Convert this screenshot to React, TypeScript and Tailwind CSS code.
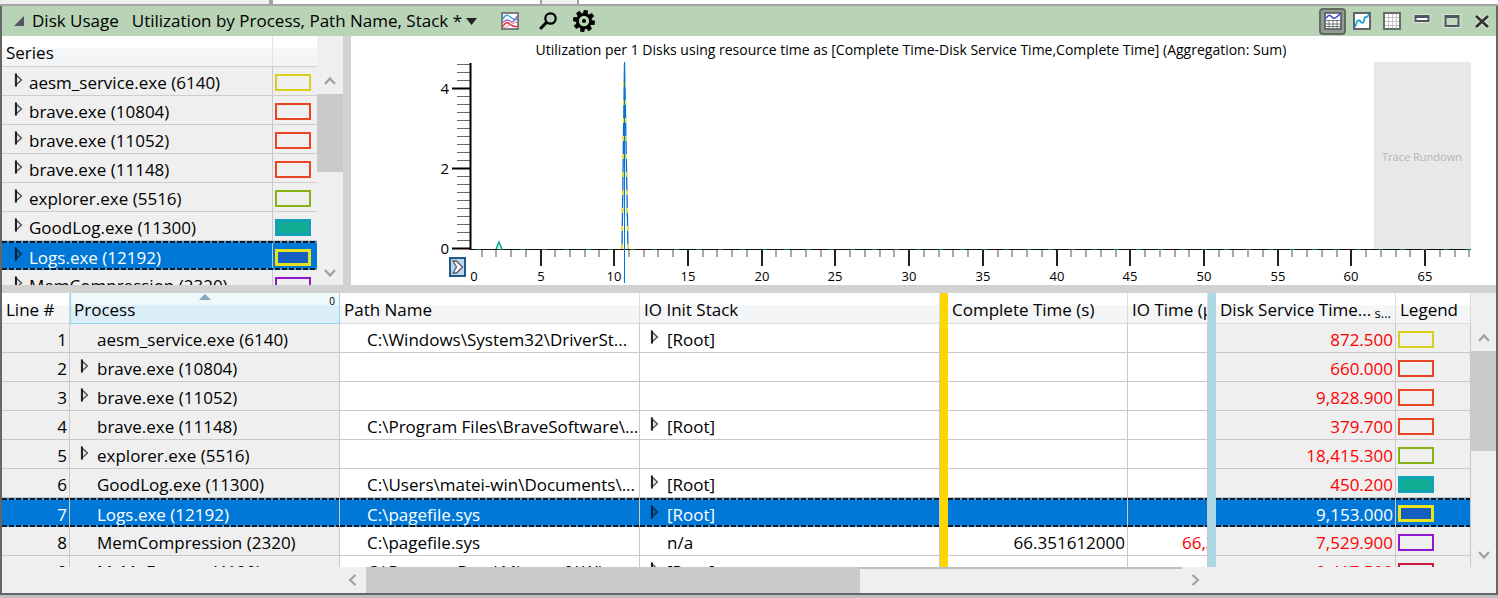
import React from "react";

type Row = { name: string; expand?: boolean; path?: string; stack?: string; stackExpand?: boolean; complete?: string; io?: string; disk: string; color: string; fill?: string };

const rows: Row[] = [
  { name: "aesm_service.exe (6140)", path: "C:\\Windows\\System32\\DriverSt...", stack: "[Root]", stackExpand: true, disk: "872.500", color: "#d6d01c" },
  { name: "brave.exe (10804)", expand: true, disk: "660.000", color: "#ea4522" },
  { name: "brave.exe (11052)", expand: true, disk: "9,828.900", color: "#ea4522" },
  { name: "brave.exe (11148)", path: "C:\\Program Files\\BraveSoftware\\...", stack: "[Root]", stackExpand: true, disk: "379.700", color: "#ea4522" },
  { name: "explorer.exe (5516)", expand: true, disk: "18,415.300", color: "#86b313" },
  { name: "GoodLog.exe (11300)", path: "C:\\Users\\matei-win\\Documents\\...", stack: "[Root]", stackExpand: true, disk: "450.200", color: "#12a2b8", fill: "#12ad94" },
  { name: "Logs.exe (12192)", path: "C:\\pagefile.sys", stack: "[Root]", stackExpand: true, disk: "9,153.000", color: "#e8e31c", fill: "#155fc1" },
  { name: "MemCompression (2320)", path: "C:\\pagefile.sys", stack: "n/a", complete: "66.351612000", io: "66,351", disk: "7,529.900", color: "#9017cf" },
  { name: "MsMpEng.exe (4120)", path: "C:\\ProgramData\\Microsoft\\Wi...", stack: "[Root]", stackExpand: true, disk: "9,417.500", color: "#d0173f" },
];
const SELECTED = 6;

const headerBg = "bg-[linear-gradient(#ffffff_0%,#ffffff_38%,#f5f6f8_42%,#f2f4f6_100%)]";
const dash = "bg-[repeating-linear-gradient(90deg,#0b1a28_0_5px,#3f9be4_5px_7px)]";

function Swatch({ color, fill }: { color: string; fill?: string }) {
  return (
    <svg viewBox="0 0 36 17" className="block h-[17px] w-9">
      <rect x={fill ? 1.5 : 1} y={fill ? 1.5 : 1} width={fill ? 33 : 34} height={fill ? 14 : 15} fill={fill ?? "none"} stroke={color} strokeWidth={fill ? 3 : 2} />
    </svg>
  );
}

function Expander({ dark }: { dark?: boolean }) {
  return (
    <svg viewBox="0 0 9 14" className="block h-[14px] w-[9px]">
      <path d="M1.500 1.500 7.500 7 1.500 12.500Z" fill={dark ? "#0a63a8" : "#e6e6e6"} stroke={dark ? "#082b50" : "#444"} strokeWidth="1.2" />
      <path d="M2 .6v12.8" stroke={dark ? "#061c36" : "#222"} strokeWidth="2" />
    </svg>
  );
}

function Chevron({ d }: { d: string }) {
  return (
    <svg viewBox="0 0 12 12" className="h-3 w-3" fill="none" stroke="#a0a0a0" strokeWidth="2.2">
      <path d={d} />
    </svg>
  );
}

function VerticalScroll({ label, thumb }: { label: string; thumb: string }) {
  return (
    <div className="flex w-full flex-col items-center bg-[#efefef]">
      <button aria-label={`Scroll ${label} up`} className="flex h-[27px] w-full items-center justify-center"><Chevron d="M1 9 6 3.5 11 9" /></button>
      <div className={`w-full bg-[#cacaca] ${thumb}`} />
      <div className="flex-1" />
      <button aria-label={`Scroll ${label} down`} className="flex h-6 w-full items-center justify-center"><Chevron d="M1 3 6 8.500 11 3" /></button>
    </div>
  );
}

function SelectionEdges() {
  return (
    <>
      <div className={`absolute inset-x-0 top-0 h-[2px] ${dash}`} />
      <div className={`absolute inset-x-0 bottom-0 h-[2px] ${dash}`} />
    </>
  );
}

function TitleBar() {
  return (
    <header className="flex h-[30px] shrink-0 items-center bg-[#b9d3b7] pr-[5px] pl-3">
      <svg viewBox="0 0 10 10" className="mr-2 h-[10px] w-[10px]"><path d="M10 0v10H0Z" fill="#55555f" /></svg>
      <h1 className="mr-[13px] text-[17px]">Disk Usage</h1>
      <button className="flex items-center gap-1 text-[17px]">
        <span>Utilization by Process, Path Name, Stack *</span>
        <svg viewBox="0 0 11 7" className="h-[7px] w-[11px]"><path d="M0 0h11L5.500 7Z" fill="#222" /></svg>
      </button>
      <button aria-label="Graph settings" className="ml-6">
        <svg viewBox="0 0 18 18" className="h-[18px] w-[18px]" fill="none">
          <rect x="1" y="1" width="16" height="16" fill="#fff" stroke="#66616a" strokeWidth="1.6" />
          <path d="M2 7.500C3.500 3 6 2.500 8 4s4 4.500 8 3.500" stroke="#39a7e0" strokeWidth="1.4" />
          <path d="M2 10.500c3-3 5-3.500 7-1.500s4 1.500 7-5" stroke="#a06bc5" strokeWidth="1.4" />
          <path d="M2 14.500c2-4 4-4.500 6-3s4 3.500 8 3" stroke="#ee3340" strokeWidth="1.6" />
          <path d="M2 16c4-1 5-2 7-3s4-2 7-3" stroke="#f0808a" strokeWidth="1" />
        </svg>
      </button>
      <button aria-label="Find" className="ml-5">
        <svg viewBox="0 0 18 18" className="h-[18px] w-[18px]" fill="none" stroke="#000">
          <circle cx="11.500" cy="6.500" r="5.200" strokeWidth="2.200" />
          <path d="M7.500 10.500 2 16" strokeWidth="3" strokeLinecap="round" />
        </svg>
      </button>
      <button aria-label="Settings" className="ml-4">
        <svg viewBox="-11 -11 22 22" className="h-[22px] w-[22px]">
          {[10, 55, 100, 145, 190, 235, 280, 325].map((a) => <path key={a} d="M-2.500-7 -2-11H2l.5 4Z" transform={`rotate(${a})`} />)}
          <circle r="6.600" fill="none" stroke="#000" strokeWidth="2.800" />
          <circle r="2" />
        </svg>
      </button>
      <div className="flex-1" />
      <button aria-label="Graph and table" aria-pressed="true" className="flex h-[27px] w-[27px] items-center justify-center rounded-sm border-2 border-[#636b62] bg-[#939c92]">
        <svg viewBox="0 0 18 18" className="h-[18px] w-[18px]" fill="none">
          <rect x="1" y="1" width="16" height="16" fill="#fff" stroke="#55575c" strokeWidth="1.600" />
          <path d="M1 8.500h16M5 9v8M9 9v8M13 9v8M1 12h16M1 14.500h16" stroke="#777" />
          <path d="M2 6.500C4 3 6 2.500 8 5s4 1 8-3" stroke="#3b41c5" strokeWidth="1.500" />
        </svg>
      </button>
      <button aria-label="Graph only" className="ml-[7px]">
        <svg viewBox="0 0 18 18" className="h-[18px] w-[18px]" fill="none">
          <rect x="1" y="1" width="16" height="16" fill="#fff" stroke="#55575c" strokeWidth="1.800" />
          <path d="M2 15C4 9 5 7 7 9s3 3 4 0 0-4 2-4 2-1 3-3" stroke="#1ba1dc" strokeWidth="1.800" />
        </svg>
      </button>
      <button aria-label="Table only" className="ml-3">
        <svg viewBox="0 0 18 18" className="h-[18px] w-[18px]" fill="none">
          <rect x="1" y="1" width="16" height="16" fill="#fff" />
          <path d="M5.500 2v14M9.500 2v14M13.500 2v14M2 5.500h14M2 9.500h14M2 13.500h14" stroke="#c4c4c4" />
          <rect x="1" y="1" width="16" height="16" stroke="#5c5e60" strokeWidth="1.800" />
        </svg>
      </button>
      <button aria-label="Minimize" className="ml-3">
        <svg viewBox="0 0 18 18" className="h-[18px] w-[18px]"><rect x=".5" y="2" width="17" height="9" rx="1" fill="#dbe8d9" /><rect x="2.500" y="4" width="13" height="5" fill="#fff" stroke="#505360" strokeWidth="2" /><path d="M2 4.500h14" stroke="#505360" strokeWidth="3" /></svg>
      </button>
      <button aria-label="Maximize" className="ml-3">
        <svg viewBox="0 0 18 18" className="h-[18px] w-[18px]"><rect x=".5" y="2" width="17" height="14" rx="1" fill="#dbe8d9" /><rect x="2.500" y="4" width="13" height="10" fill="#c3d9c1" stroke="#505360" strokeWidth="2" /><path d="M2 4.500h14" stroke="#505360" strokeWidth="3" /></svg>
      </button>
      <button aria-label="Close" className="ml-3">
        <svg viewBox="0 0 18 18" className="h-[18px] w-[18px]"><path d="M3 4 15 15M15 4 3 15" stroke="#dbe8d9" strokeWidth="5" /><path d="M3 4 15 15M15 4 3 15" stroke="#333" strokeWidth="2.800" /></svg>
      </button>
    </header>
  );
}

function SeriesPanel() {
  return (
    <section className="flex w-[341px] shrink-0 bg-[#efefef]">
      <div className="flex min-w-0 flex-1 flex-col overflow-hidden">
        <div className={`flex h-[31px] shrink-0 items-center border-b border-[#d0d0d0] text-[17px] ${headerBg}`}>
          <h2 className="flex h-full flex-1 items-center border-r border-[#e3e3e3] pt-1 pl-1">Series</h2>
          <div className="w-[44px]" />
        </div>
        <ul>
          {rows.slice(0, 8).map((r, i) => (
            <li key={i} className={`relative flex h-[29px] ${i === SELECTED ? "bg-[#0078d7] text-white" : "border-b border-[#cdcdcd]"}`}>
              <div className="flex flex-1 items-center border-r border-[#c8c8c8] pl-3">
                <button aria-label={`Expand ${r.name}`} className="mb-[3px]"><Expander dark={i === SELECTED} /></button>
                <span className="pt-1 pl-[6px] text-[17px] leading-6">{r.name}</span>
              </div>
              <div className="flex w-[44px] items-center pt-[3px] pl-[2px]"><Swatch color={r.color} fill={r.fill} /></div>
              {i === SELECTED && <SelectionEdges />}
            </li>
          ))}
        </ul>
      </div>
      <div className="flex w-[26px] shrink-0 pt-[31px]"><VerticalScroll label="series" thumb="h-[78px]" /></div>
    </section>
  );
}

const tickX = (t: number) => Math.round(115.8 + t * 14.744);

function Chart() {
  const seconds = Array.from({ length: 68 }, (_, i) => i + 1);
  const levels = Array.from({ length: 24 }, (_, i) => i);
  return (
    <section className="relative flex min-w-0 flex-1 flex-col bg-white">
      <h2 className="h-[26px] pt-[3px] pr-[25px] text-center text-[14px] leading-[22px] whitespace-nowrap">
        Utilization per 1 Disks using resource time as [Complete Time-Disk Service Time,Complete Time] (Aggregation: Sum)
      </h2>
      <svg viewBox="0 0 1145 223" preserveAspectRatio="xMinYMin meet" className="min-h-0 w-full flex-1" fontFamily="'Open Sans', sans-serif">
        <rect x="1023" y="0" width="97" height="187" fill="#e8e8e8" />
        <text x="1071" y="99" textAnchor="middle" fontSize="11" fill="#b4b4b4">Trace Rundown</text>
        {levels.map((i) => <path key={i} d={i % 10 ? `M106 ${186.5 - i * 8}h13` : `M101 ${186.5 - i * 8}h18`} stroke={i % 10 ? "#666" : "#000"} strokeWidth={i % 10 ? 1 : 2} />)}
        <path d="M119.500 1V188" stroke="#000" strokeWidth="2" />
        {[["4", 32], ["2", 112], ["0", 192]].map(([s, y]) => <text key={s} x="98" y={y} textAnchor="end" fontSize="15">{s}</text>)}
        <path d="M119 187.500H1120" stroke="#111" />
        <path d="M125 187.500H1120" stroke="#17643b" strokeDasharray="5 17" />
        {seconds.map((t) => <path key={t} d={t % 5 ? `M${tickX(t)} 188v7` : `M${tickX(t)} 188v16`} stroke={t % 5 ? "#aaa" : "#222"} strokeWidth="2" />)}
        <text x="123" y="219" textAnchor="middle" fontSize="13">0</text>
        {seconds.filter((t) => t % 5 === 0).map((t) => <text key={t} x={tickX(t)} y="219" textAnchor="middle" fontSize="13">{t}</text>)}
        <path d="M145 187l3-7 3 7" fill="#c6efec" stroke="#13a89c" strokeWidth="1.500" />
        <path d="M271 187 273.500 1 277 187" fill="#fff" stroke="#0b67c9" strokeWidth="1.300" />
        <path d="M271 187 273.300 8M277 187 273.700 8" fill="none" stroke="#e6e13a" strokeWidth="1.800" strokeDasharray="5 13" />
        <path d="M273.500 0V221" stroke="#0078d7" />
      </svg>
      <button aria-label="Expand axis" className="absolute bottom-2 left-[98px] flex h-5 w-[17px] items-center justify-center border-2 border-[#225a87] bg-[#b5d9ee]">
        <svg viewBox="0 0 12 14" className="h-[14px] w-3"><path d="M1 1h3.500L10.500 7 4.500 13H1l3.500-6Z" fill="#fff" stroke="#5b5866" strokeWidth="1.300" /></svg>
      </button>
    </section>
  );
}

function DataTable() {
  const th = `relative h-[31px] overflow-hidden border-r border-b border-[#dcdcdc] px-1 pt-1 text-left font-normal whitespace-nowrap ${headerBg}`;
  return (
    <section className="flex min-h-0 flex-1 bg-[#efefef]">
      <div className="min-w-0 flex-1 overflow-hidden">
        <table className="w-full table-fixed border-separate border-spacing-0 text-[17px] leading-6">
          <colgroup>
            <col className="w-[68px]" /><col className="w-[270px]" /><col className="w-[300px]" /><col />
            <col className="w-2" /><col className="w-[180px]" /><col className="w-20" /><col className="w-2" />
            <col className="w-[180px]" /><col className="w-[75px]" />
          </colgroup>
          <thead>
            <tr>
              <th className={th}>Line #</th>
              <th aria-sort="ascending" className="relative h-[31px] border border-t-0 border-[#8ed4f0] bg-[linear-gradient(#f2f9fd_0%,#eef7fb_40%,#dceef7_42%,#dbeef7_100%)] px-[3px] pt-1 text-left font-normal">
                Process
                <svg viewBox="0 0 12 6" className="absolute top-px left-1/2 -ml-[6px] h-[6px] w-3"><path d="M6 0 12 6H0Z" fill="#7fa9bf" /></svg>
                <span className="absolute top-0 right-1 text-[10px] leading-4">0</span>
              </th>
              <th className={th}>Path Name</th>
              <th className={th}>IO Init Stack</th>
              <th aria-label="Key column divider" className="bg-[#ffd700] p-0" />
              <th className={th}>Complete Time (s)</th>
              <th className={th}>IO Time (μs)</th>
              <th aria-label="Graph column divider" className="bg-[#add8e6] p-0" />
              <th className={th}><div className="flex justify-between"><span>Disk Service Time...</span><span className="pt-[5px] text-[13px] leading-5">s...</span></div></th>
              <th className={th}>Legend</th>
            </tr>
          </thead>
          <tbody>
            {rows.map((r, i) => {
              const on = i === SELECTED;
              const td = `relative h-[29px] border-r border-[#c8c8c8] p-0 pt-1 whitespace-nowrap overflow-hidden ${on ? "bg-[#0078d7] text-white" : "border-b"}`;
              const gray = on ? "" : "bg-[#efefef]";
              const white = on ? "" : "bg-white";
              const edges = on && <SelectionEdges />;
              return (
                <tr key={i}>
                  <td className={`${td} ${gray} text-right`}><span className="pr-[2px]">{i + 1}</span>{edges}</td>
                  <td className={`${td} ${gray}`}>
                    <div className="flex items-center pl-[10px]">
                      <div className="mb-[6px] w-[9px]">{r.expand && <button aria-label={`Expand ${r.name}`} className="block"><Expander /></button>}</div>
                      <span className="pl-2">{r.name}</span>
                    </div>
                    {edges}
                  </td>
                  <td className={`${td} ${white}`}><div className="pl-[27px]">{r.path}</div>{edges}</td>
                  <td className={`${td} ${white}`}>
                    <div className="flex items-center pl-[10px]">
                      <div className="mb-[6px] w-[9px]">{r.stackExpand && <button aria-label={`Expand stack of ${r.name}`} className="block"><Expander dark={on} /></button>}</div>
                      <span className="pl-2">{r.stack}</span>
                    </div>
                    {edges}
                  </td>
                  <td className="bg-[#ffd700] p-0" />
                  <td className={`${td} ${white} text-right`}><span className="pr-[2px]">{r.complete}</span>{edges}</td>
                  <td className={`${td} ${white}`}><span className="pl-[54px] text-[#ff0000]">{r.io}</span>{edges}</td>
                  <td className="bg-[#add8e6] p-0" />
                  <td className={`${td} ${gray} text-right`}><span className={on ? "pr-[2px]" : "pr-[2px] text-[#ff0000]"}>{r.disk}</span>{edges}</td>
                  <td className={`${td} ${gray}`}><div className="pb-[2px] pl-[2px]"><Swatch color={r.color} fill={r.fill} /></div>{edges}</td>
                </tr>
              );
            })}
          </tbody>
        </table>
      </div>
      <div className="flex w-[25px] shrink-0 pt-[31px]"><VerticalScroll label="table" thumb="h-[100px]" /></div>
    </section>
  );
}

export default function App() {
  return (
    <div className="flex h-screen min-h-[598px] flex-col overflow-hidden bg-[#bfbfbf] pb-[3px] font-['Open_Sans',sans-serif] text-black">
      <div className="flex h-[6px] shrink-0 border-b-2 border-[#a5a5a5] bg-white">
        <div className="w-[273px] border-r-4 border-[#a0a0a0] bg-[#efefef]" />
        <div className="w-[267px]" />
        <div className="w-[39px] border-x-2 border-[#a0a0a0] bg-[#efefef]" />
      </div>
      <main className="flex min-h-0 flex-1 flex-col border-x-2 border-b-2 border-[#666]">
        <TitleBar />
        <div className="flex h-[249px] shrink-0">
          <SeriesPanel />
          <div className="w-2 shrink-0 bg-[#d2d2d2]" />
          <Chart />
        </div>
        <div className="h-2 shrink-0 bg-[#d2d2d2]" />
        <DataTable />
        <div className="flex h-[26px] shrink-0 items-center bg-[#efefef] pr-[288px] pl-[338px]">
          <button aria-label="Scroll left" className="flex h-full w-[26px] items-center justify-center"><Chevron d="M8.500 1 3 6 8.500 11" /></button>
          <div className="flex h-full flex-1"><div className="h-full w-[494px] bg-[#cacaca]" /><div className="flex-1 border-t-2 border-[#bebebe]" /></div>
          <button aria-label="Scroll right" className="flex h-full w-[26px] items-center justify-center"><Chevron d="M3.500 1 9 6 3.500 11" /></button>
        </div>
      </main>
    </div>
  );
}
